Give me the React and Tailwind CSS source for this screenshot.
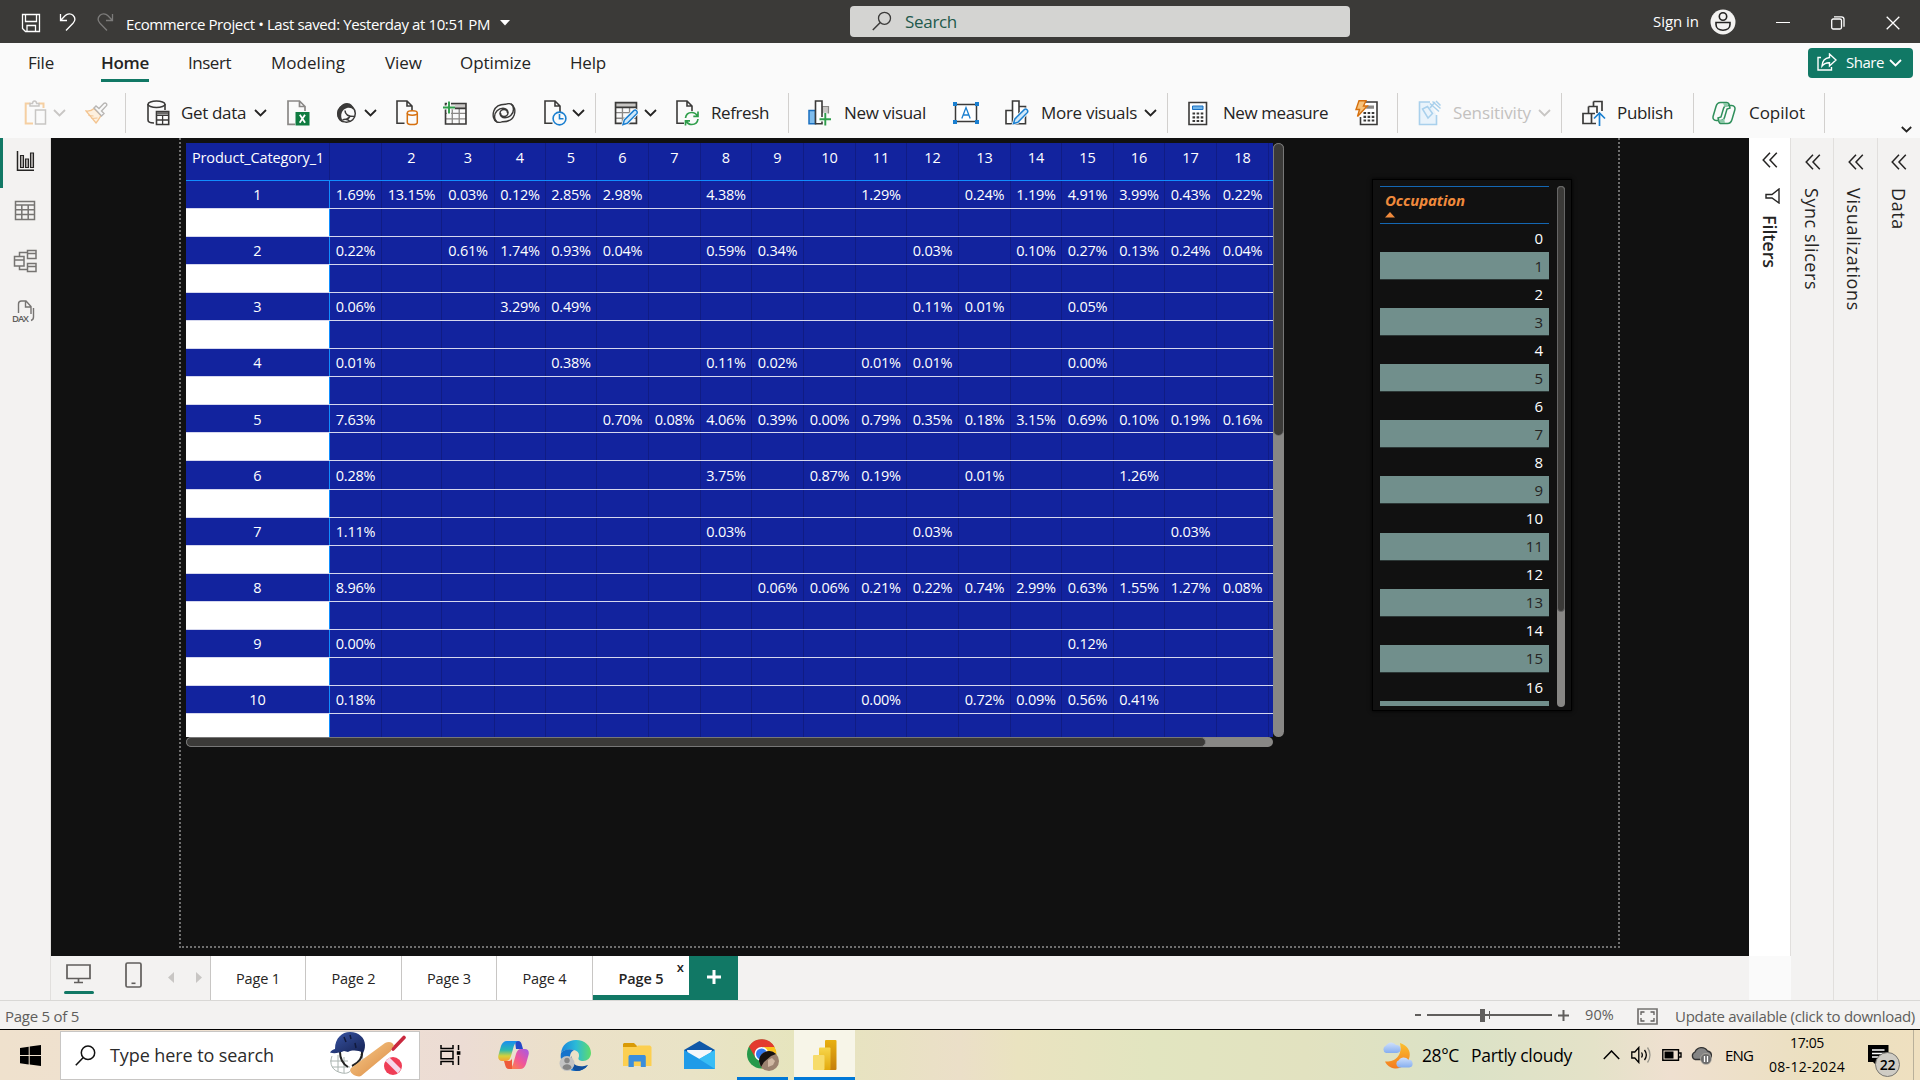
import { useLayoutEffect, useRef } from "react";

/* Single line of text whose tracking is adjusted so that it fills its box. */
function T({ className = "", vertical = false, children }) {
  const box = useRef(null);
  const inner = useRef(null);
  useLayoutEffect(() => {
    const el = inner.current;
    el.style.letterSpacing = "0px";
    const b = box.current.getBoundingClientRect();
    const r = el.getBoundingClientRect();
    const diff = vertical ? b.height - r.height : b.width - r.width;
    el.style.letterSpacing = diff / String(children).length + "px";
  });
  return (
    <span ref={box} className={"block shrink-0 whitespace-pre " + className}>
      <span ref={inner} className="inline-block">{children}</span>
    </span>
  );
}

function Svg({ w, h, className = "", children, ...rest }) {
  return (
    <svg width={w} height={h} viewBox={`0 0 ${w} ${h}`} fill="none" className={"block shrink-0 " + className} {...rest}>
      {children}
    </svg>
  );
}

const Chevron = ({ className = "", color = "#252423" }) => (
  <Svg w={13} h={8} className={className}>
    <path d="M1 1l5.5 5.5L12 1" stroke={color} strokeWidth="1.8" />
  </Svg>
);

const Sep = ({ className = "" }) => <div className={"h-10 w-px shrink-0 bg-[#d2d0ce] " + className} />;

const DocShape = ({ stroke = "#3b3a39" }) => (
  <path d="M8.5 23.3H1V1h10l5 5v6M11 1v5h5" stroke={stroke} strokeWidth="1.6" fill="none" />
);

const Grid3 = ({ x = 0, y = 0, s = 22, stroke = "#3b3a39", head = "#c8c6c4" }) => (
  <g transform={`translate(${x} ${y}) scale(${s / 22})`}>
    <path d="M1 1h20v4.5H1z" fill={head} />
    <path d="M1 10.7h20M1 16h20M7.6 5.5V21M14.4 5.5V21" stroke="#8a8886" strokeWidth="1.3" />
    <path d="M1 1h20v20H1zM1 5.7h20" stroke={stroke} strokeWidth="1.6" />
  </g>
);

const Pencil = ({ x, y }) => (
  <g transform={`translate(${x} ${y})`}>
    <path d="M1 15l1.400-4.600L12 .900c1.800-1 4 1 3 3L5.600 13.600z" fill="#fafafa" stroke="#fafafa" strokeWidth="3" />
    <path d="M1 15l1.400-4.600L12 .900c1.800-1 4 1 3 3L5.600 13.600z" fill="#cfe8fa" stroke="#1a7fd0" strokeWidth="1.500" />
  </g>
);

function TitleBar() {
  return (
    <header className="flex h-[43px] shrink-0 items-center bg-[#3b3a38] text-white">
      <Svg w={20} h={20} className="ml-[21px] mt-0.5">
        <path d="M1.500 1.500h17v17h-14l-3-3zM4.500 1.500v7h11v-7M6 18.500v-6h8.500v6" stroke="#fff" strokeWidth="1.300" />
      </Svg>
      <Svg w={18} h={20} className="ml-[18px]">
        <path d="M1.500 2v6.500H8M1.500 8.500l4.800-5c2.200-2.200 5.600-2.300 7.700-.2 2.300 2.300 2.200 5.500 0 7.900L7 18.500" stroke="#fff" strokeWidth="1.300" />
      </Svg>
      <Svg w={18} h={20} className="ml-[19px]">
        <path d="M16.500 2v6.500H10M16.500 8.500l-4.800-5C9.500 1.300 6.100 1.200 4 3.300 1.700 5.600 1.800 8.800 4 11.200l7 7.300" stroke="#7c7b7a" strokeWidth="1.300" />
      </Svg>
      <T className="ml-[12px] mt-1.5 w-[364px] text-[15px]">Ecommerce Project • Last saved: Yesterday at 10:51 PM</T>
      <Svg w={10} h={6} className="ml-[10px] mt-0.5"><path d="M0 0h10L5 5.500z" fill="#fff" /></Svg>
      <div className="-mt-px ml-[340px] flex h-[31px] w-[500px] items-center rounded-sm bg-[#d4d4d2]">
        <Svg w={20} h={20} className="ml-[22px]">
          <circle cx="12.500" cy="7.300" r="6" stroke="#3b3a39" strokeWidth="1.300" />
          <path d="M8.300 11.500L.8 19" stroke="#3b3a39" strokeWidth="1.500" />
        </Svg>
        <T className="ml-[13px] mt-0.5 w-[52px] text-[17px] text-[#22594b]">Search</T>
      </div>
      <T className="ml-[303px] w-[46px] text-[15px]">Sign in</T>
      <Svg w={26} h={26} className="ml-[11px]">
        <circle cx="13" cy="13" r="12.500" fill="#f3f2f1" />
        <circle cx="13" cy="7.500" r="3.700" stroke="#252423" strokeWidth="1.600" />
        <path d="M6 13.500h14v2c0 3.500-3 5.700-7 5.700s-7-2.200-7-5.700z" stroke="#252423" strokeWidth="1.600" />
      </Svg>
      <div className="ml-[40px] mt-0.5 h-[1.500px] w-[14px] bg-white" />
      <Svg w={14} h={14} className="ml-[41px] mt-0.5">
        <rect x=".7" y="3" width="9.800" height="10" rx="1.500" stroke="#fff" strokeWidth="1.300" />
        <path d="M3 .8h7.500c1.500 0 2.500 1 2.500 2.500v7.500" stroke="#fff" strokeWidth="1.300" />
      </Svg>
      <Svg w={14} h={14} className="ml-[41px] mt-0.5"><path d="M.7.7l12.600 12.600M13.300.7L.7 13.300" stroke="#fff" strokeWidth="1.300" /></Svg>
    </header>
  );
}

function MenuBar() {
  return (
    <nav className="flex h-[40px] shrink-0 items-center text-[17px] text-[#252423]">
      <T className="-mt-px ml-[28px] w-[26px]">File</T>
      <div className="ml-[47px] flex h-full w-[48px] flex-col justify-between">
        <T className="mt-[7px] w-[48px] font-semibold">Home</T>
        <div className="mb-[1px] h-[3px] bg-[#117865]" />
      </div>
      <T className="-mt-px ml-[39px] w-[43px]">Insert</T>
      <T className="-mt-px ml-[40px] w-[74px]">Modeling</T>
      <T className="-mt-px ml-[40px] w-[37px]">View</T>
      <T className="-mt-px ml-[38px] w-[71px]">Optimize</T>
      <T className="-mt-px ml-[39px] w-[36px]">Help</T>
      <button className="ml-[1202px] flex h-[30px] w-[105px] items-center rounded bg-[#117865] text-white">
        <Svg w={20} h={18} className="-mt-0.5 ml-[9px]">
          <path d="M4 4.500H1V17h13.500v-3" stroke="#fff" strokeWidth="1.400" />
          <path d="M12.500 1l6.500 6-6.500 6V9.700C9 9.500 7 10.500 5 13c.3-5 3-8 7.500-8.500z" stroke="#fff" strokeWidth="1.400" />
        </Svg>
        <T className="-mt-0.5 ml-[9px] w-[38px] text-[15px]">Share</T>
        <Chevron className="ml-[5px]" color="#fff" />
      </button>
    </nav>
  );
}

function Ribbon() {
  return (
    <div className="flex h-[55px] shrink-0 items-center pt-[5px] text-[17px] text-[#252423]">
      <Svg w={23} h={26} className="ml-[24px]">
        <path d="M6.500 3.500H1.700v20H9M14.500 3.500h5V8" stroke="#f5cfa2" strokeWidth="2" />
        <path d="M6 6V3.500h2.500C8.700 1.800 9.500 1 10.500 1s1.900.8 2.200 2.500H15V6zM11.500 10h10v14h-10z" stroke="#c8c6c4" strokeWidth="1.500" fill="#fafafa" />
      </Svg>
      <Chevron className="ml-[6px]" color="#c8c6c4" />
      <Svg w={24} h={22} className="ml-[19px]">
        <path d="M1 9c4 .5 6-.5 8-2.500l7 7c-1.500 2.500-2.500 4.500-5 7.500z" fill="#fdf0df" stroke="#f3c490" strokeWidth="1.300" />
        <path d="M3.500 13.500l5 .5M6.500 16.500l6-.5" stroke="#f3c490" />
        <path d="M9 6l2-2 3 2.500 5-5.200c1.500-1 3.500.6 2.500 2.400L16.500 9l2.500 2.500-2.500 2.500z" fill="#fafafa" stroke="#b8b6b4" strokeWidth="1.400" />
      </Svg>
      <Sep className="ml-[16px]" />
      <Svg w={23} h={26} className="ml-[21px]">
        <path d="M1 4v16c0 1.800 2.500 3 6 3M18 4v6" stroke="#3b3a39" strokeWidth="1.600" />
        <ellipse cx="9.500" cy="4.200" rx="8.500" ry="3.200" stroke="#3b3a39" strokeWidth="1.500" />
        <path d="M9.500 11.500h12.200v13H9.500z" fill="#fff" stroke="#3b3a39" strokeWidth="1.600" />
        <path d="M9.500 15.300h12.200M9.500 20h12.200M15.600 15v9" stroke="#3b3a39" strokeWidth="1.300" />
        <path d="M10 12h11v2.500H10z" fill="#6b6a69" />
      </Svg>
      <T className="ml-[11px] w-[65px]">Get data</T>
      <Chevron className="ml-[8px]" />
      <Svg w={23} h={26} className="ml-[20px]">
        <path d="M8 24.300H1V1h11.500l5.500 5.500V11M12.500 1v5.500H18" stroke="#8a8886" strokeWidth="1.700" />
        <path d="M8.500 12h14v13.500h-14z" fill="#107c41" />
        <path d="M12.800 14.800l5.300 8M18 14.800l-5.300 8" stroke="#fff" strokeWidth="1.800" />
      </Svg>
      <Svg w={21} h={22} className="ml-[26px]">
        <circle cx="10.500" cy="11.500" r="8.800" stroke="#3b3a39" strokeWidth="1.500" />
        <path d="M11 1c-3 0-5 1.500-7 4C1.500 8 .3 12 2 16c1 2.500 3 4 5.500 4.500C5 17 4.500 13 6 10c1-2 2.500-3.300 5-4 3-.6 5 .2 6.500 2C17.500 4 15 1 11 1z" fill="#3b3a39" />
        <path d="M9 8.500c0 3 2.500 6 9.500 6M6.500 18c2-1 5-1 7.500 1.500M14 13.500c-.5 2-2 3.500-4 4" stroke="#3b3a39" strokeWidth="1.500" />
      </Svg>
      <Chevron className="ml-[7px]" />
      <Svg w={23} h={26} className="ml-[19px]">
        <DocShape />
        <path d="M11.300 13v9.500c0 2.800 10 2.800 10 0V13" fill="#fafafa" stroke="#d6700f" strokeWidth="1.500" />
        <ellipse cx="16.300" cy="13" rx="5" ry="2.200" fill="#fafafa" stroke="#d6700f" strokeWidth="1.500" />
      </Svg>
      <Svg w={25} h={25} className="ml-[24px]">
        <Grid3 x={1.500} y={1.500} s={22.500} />
        <path d="M0 6.500h12M6 0v13" stroke="#fafafa" strokeWidth="4" />
        <path d="M0 6.500h12M6 .5v12" stroke="#2f9e4b" strokeWidth="1.900" />
      </Svg>
      <Svg w={24} h={20} className="ml-[24px]">
        <path d="M15.500 10c0-2-1.500-3.500-3.500-3.500S8 8 8 10.200c0 2.500 2 4.500 5 4.500 4.500 0 8.500-3.500 8.500-8.500 0-2.500-1-4.200-2.500-5.200" stroke="#3b3a39" strokeWidth="1.500" />
        <path d="M8.500 10c0 2 1.500 3.500 3.500 3.500S16 12 16 9.800c0-2.500-2-4.500-5-4.500C6.500 5.300 2.500 8.800 2.500 13.800c0 2.500 1 4.200 2.500 5.200" stroke="#3b3a39" strokeWidth="1.500" />
        <path d="M19 1c-1.500-.6-3-.5-5 .2C8 1 3.500 3.500 1.800 8 .5 12 1 17 5 19c1.500.6 3 .5 5-.2 6 .2 10.500-2.300 12.200-6.800C23.500 8 23 3 19 1z" stroke="#3b3a39" strokeWidth="1.400" />
      </Svg>
      <Svg w={23} h={26} className="ml-[28px]">
        <DocShape />
        <circle cx="15.500" cy="18.500" r="6.400" fill="#fafafa" stroke="#1a7fd0" strokeWidth="1.600" />
        <path d="M15.500 14v4.800h4" stroke="#1a7fd0" strokeWidth="1.600" />
      </Svg>
      <Chevron className="ml-[5px]" />
      <Sep className="ml-[10px]" />
      <Svg w={25} h={25} className="ml-[18px]"><Grid3 x={0.500} y={0.500} s={23} /><Pencil x={8} y={8.500} /></Svg>
      <Chevron className="ml-[5px]" />
      <Svg w={24} h={26} className="ml-[19px]">
        <DocShape />
        <path d="M9.500 18c.5-3.500 3-5.500 6.200-5.500 2.500 0 4.500 1.300 5.800 3.500M22 12v4.500h-4.500M22 19c-.5 3.500-3 5.500-6.200 5.500-2.500 0-4.500-1.300-5.800-3.500M9.500 25v-4.500H14" stroke="#fafafa" strokeWidth="3" />
        <path d="M9.500 18c.5-3.500 3-5.500 6.200-5.500 2.500 0 4.500 1.300 5.800 3.500M22 11.500v4.800h-4.700M22 19c-.5 3.500-3 5.500-6.200 5.500-2.500 0-4.500-1.300-5.800-3.500M9.500 25.500v-4.700H14" stroke="#2f9e4b" strokeWidth="1.700" />
      </Svg>
      <T className="ml-[11px] w-[58px]">Refresh</T>
      <Sep className="ml-[19px]" />
      <Svg w={24} h={26} className="ml-[19px]">
        <path d="M1 10.500h6.500v13.300H1z" fill="#7fbdee" stroke="#1a6fc0" strokeWidth="1.500" />
        <path d="M14 6.500h6.500V13H14z" fill="#c8c6c4" stroke="#8a8886" strokeWidth="1.200" />
        <path d="M7.500 1H14v22.800H7.500z" fill="#fff" stroke="#3b3a39" strokeWidth="1.600" />
        <path d="M11 19.300h13M17.300 12.500V26" stroke="#fafafa" strokeWidth="4.500" />
        <path d="M11.500 19.300H23M17.300 13v12.500" stroke="#2f9e4b" strokeWidth="1.900" />
      </Svg>
      <T className="ml-[12px] w-[82px]">New visual</T>
      <Svg w={26} h={22} className="ml-[27px]">
        <path d="M2.500 2.500h21v17h-21z" stroke="#3b3a39" strokeWidth="1.500" fill="#fff" />
        <path d="M0 0h4v4H0zM22 0h4v4h-4zM0 18h4v4H0zM22 18h4v4h-4z" fill="#1a7fd0" />
        <path d="M8.800 16.500L13 5.500l4.200 11M10.300 13h5.400" stroke="#1a7fd0" strokeWidth="1.300" />
      </Svg>
      <Svg w={25} h={26} className="ml-[26px]">
        <path d="M1 10.500h6.500v13.300H1zM14 6.500h6.500v17.300H14zM7.500 1H14v22.800H7.500z" fill="#fff" stroke="#3b3a39" strokeWidth="1.600" />
        <Pencil x={7.500} y={8.500} />
      </Svg>
      <T className="ml-[11px] w-[96px]">More visuals</T>
      <Chevron className="ml-[7px]" />
      <Sep className="ml-[10px]" />
      <Svg w={20} h={25} className="ml-[20px]">
        <path d="M1 1.500h17.500v22H1z" fill="#fff" stroke="#3b3a39" strokeWidth="1.600" />
        <path d="M4.500 5h10.500v3.500H4.500z" fill="#6fb4ea" stroke="#1a6fc0" />
        <path d="M4.500 12.500h11M4.500 16.300h11M4.500 20h11" stroke="#3b3a39" strokeWidth="2.200" strokeDasharray="2.600 1.500" />
      </Svg>
      <T className="ml-[15px] w-[105px]">New measure</T>
      <Svg w={23} h={26} className="ml-[27px]">
        <path d="M8 2h14v22.500H5.500V17" fill="#fff" stroke="#3b3a39" strokeWidth="1.600" />
        <path d="M12 5.500h7v3.300h-8z" fill="#8a8886" />
        <path d="M8.500 13h11M8.500 16.800h11M8.500 20.500h11" stroke="#3b3a39" strokeWidth="2.200" strokeDasharray="2.600 1.500" />
        <path d="M4 .7h7L8.500 6h3.800L2.500 16.500l2-7H1z" fill="#f7c27a" stroke="#d6700f" strokeWidth="1.400" />
      </Svg>
      <Sep className="ml-[19px]" />
      <Svg w={24} h={26} className="ml-[20px]">
        <path d="M12 2H1.500v22.500h17V15" fill="#e9f3fb" stroke="#a9d0ec" strokeWidth="1.600" />
        <path d="M4.500 9l5-2.500 5 7L10 18z M12 3.500l9 8M14.500 1.500l8 7M18 1l4.500 4.500M12 8l5-6" stroke="#a9d0ec" strokeWidth="1.500" />
      </Svg>
      <T className="ml-[11px] w-[78px] text-[#c3c1bf]">Sensitivity</T>
      <Chevron className="ml-[7px]" color="#c8c6c4" />
      <Sep className="ml-[10px]" />
      <Svg w={24} h={26} className="ml-[20px]">
        <path d="M11.500 1.500h8.500V11M6.500 6.500H15V13M1 13.500h8.500v10H1zM6.500 13V6.500M11.500 6.500v-5M9.500 13.500H13M9.500 23.500H14" stroke="#3b3a39" strokeWidth="1.700" />
        <path d="M17.500 26V13.500M12 18.500l5.500-5.500 5.500 5.500" stroke="#1a7fd0" strokeWidth="1.700" />
      </Svg>
      <T className="ml-[11px] w-[56px]">Publish</T>
      <Sep className="ml-[20px]" />
      <Svg w={24} h={24} className="ml-[18px]">
        <path d="M8.500 1.500h6c1.500 0 2.300.8 2.700 2.300L18 7l-3 1-2.500 8.500c-.6 2-1.600 3-3.500 3H4.200c-2.500 0-3.700-2-3-4.500L4 5.500c.7-2.500 2-4 4.500-4z" stroke="#2f8f5b" strokeWidth="1.500" />
        <path d="M15.500 22.500h-6c-1.500 0-2.300-.8-2.700-2.300L6 17l3-1 2.500-8.500c.6-2 1.600-3 3.500-3h4.800c2.500 0 3.700 2 3 4.500L20 18.500c-.7 2.500-2 4-4.500 4z" stroke="#2f8f5b" strokeWidth="1.500" />
        <path d="M11 2h4l1.500 3.500-4 .5zM6.500 19H10l2-2 1 5H9z" fill="#8cc9a8" />
      </Svg>
      <T className="ml-[13px] w-[56px]">Copilot</T>
      <Sep className="ml-[19px]" />
      <Svg w={11} h={7} className="ml-[76px] mt-[33px]"><path d="M.8 1l4.700 4.500L10.200 1" stroke="#252423" strokeWidth="1.800" /></Svg>
    </div>
  );
}

function LeftNav() {
  return (
    <aside className="flex w-[51px] shrink-0 flex-col border-r border-[#e1dfdd] bg-[#f3f2f1]">
      <div className="flex h-[50px] items-center border-l-[3px] border-[#117865]">
        <Svg w={19} h={21} className="ml-[13px] mt-[-3px]">
          <path d="M1.500 0v19.300H18" stroke="#252423" strokeWidth="1.500" />
          <path d="M4.500 4.500h3v12h-3zM9.500 8h3v8.500h-3zM14.500 2h3v14.500h-3z" fill="#a8a6a4" stroke="#252423" strokeWidth="1.100" />
        </Svg>
      </div>
      <Svg w={22} h={21} className="ml-[14px] mt-[12px]">
        <path d="M1.500 1.500h19v18h-19zM1.500 5h19M1.500 9.800h19M1.500 14.600h19M7.800 5v14.500M14.200 5v14.500" stroke="#767472" strokeWidth="1.500" />
      </Svg>
      <Svg w={24} h={24} className="ml-[13px] mt-[28px]">
        <path d="M1.500 7.500h9.500v9.500H1.500zM14.500 1.500H23v8h-8.500zM14.500 14.500H23v8h-8.500zM1.500 11h9.500M14.500 4.500H23M14.500 17.500H23M6.500 7.500v-4h8M6.500 17v3.500h8" stroke="#767472" strokeWidth="1.500" />
      </Svg>
      <Svg w={24} h={23} className="ml-[12px] mt-[27px]">
        <path d="M6.500 13V4c0-2 1-3 3-3H14l5 5.500V14M13.500 1v6H19M21.500 8v9c0 2-1 3-2.500 3.500" stroke="#767472" strokeWidth="1.400" />
        <text x="0" y="21.500" fontFamily="Open Sans" fontSize="9.500" fill="#605e5c" fontWeight="600" textLength="17">DAX</text>
      </Svg>
    </aside>
  );
}

const MATRIX = [
  ["1", "1.69%|13.15%|0.03%|0.12%|2.85%|2.98%||4.38%|||1.29%||0.24%|1.19%|4.91%|3.99%|0.43%|0.22%"],
  ["2", "0.22%||0.61%|1.74%|0.93%|0.04%||0.59%|0.34%|||0.03%||0.10%|0.27%|0.13%|0.24%|0.04%"],
  ["3", "0.06%|||3.29%|0.49%|||||||0.11%|0.01%||0.05%|||"],
  ["4", "0.01%||||0.38%|||0.11%|0.02%||0.01%|0.01%|||0.00%|||"],
  ["5", "7.63%|||||0.70%|0.08%|4.06%|0.39%|0.00%|0.79%|0.35%|0.18%|3.15%|0.69%|0.10%|0.19%|0.16%"],
  ["6", "0.28%|||||||3.75%||0.87%|0.19%||0.01%|||1.26%||"],
  ["7", "1.11%|||||||0.03%||||0.03%|||||0.03%|"],
  ["8", "8.96%||||||||0.06%|0.06%|0.21%|0.22%|0.74%|2.99%|0.63%|1.55%|1.27%|0.08%"],
  ["9", "0.00%||||||||||||||0.12%|||"],
  ["10", "0.18%||||||||||0.00%||0.72%|0.09%|0.56%|0.41%||"],
];
const HEADS = ["", "2", "3", "4", "5", "6", "7", "8", "9", "10", "11", "12", "13", "14", "15", "16", "17", "18"];
const COLS =
  "grid grid-cols-[144px_52px_60px_53px_51px_51px_52px_52px_51px_52px_52px_51px_52px_52px_51px_52px_51px_52px_52px_1fr]";

function MatrixRow({ label, cells }) {
  return (
    <>
      <div className={COLS + " h-[28.050px] shrink-0 border-b border-[#d5d7ee]"}>
        <div className="flex items-center justify-center border-r border-[#118dff] pt-px">{label}</div>
        {cells.map((c, i) => (
          <div key={i} className="flex items-center justify-center border-r border-[#101c84] pt-px tracking-[-0.250px]">{c}</div>
        ))}
      </div>
      <div className={COLS + " h-[28.050px] shrink-0 border-b border-[#d5d7ee]"}>
        <div className="border-r border-[#118dff] bg-white" />
        {cells.map((c, i) => (
          <div key={i} className="border-r border-[#101c84]" />
        ))}
      </div>
    </>
  );
}

function Matrix() {
  return (
    <section className="ml-[5px] mt-[5px] flex h-[604px] w-[1098px] flex-col">
      <div className="flex h-[594px]">
        <div className="flex h-full w-[1087px] flex-col overflow-hidden bg-[#12239e] text-[14.500px] text-white">
          <div className={COLS + " h-[38px] shrink-0 border-b border-[#118dff]"}>
            <div className="flex border-r border-[#101c84] pl-[6px] pt-[4px]"><T className="w-[132px]">Product_Category_1</T></div>
            {HEADS.map((h, i) => (
              <div key={i} className="flex justify-center border-r border-[#101c84] pt-[4px]">{h}</div>
            ))}
          </div>
          {MATRIX.map(([label, row]) => (
            <MatrixRow key={label} label={label} cells={row.split("|")} />
          ))}
        </div>
        <div className="h-full w-[11px] overflow-hidden rounded-full bg-[#888785]">
          <div className="h-[293px] w-full rounded-full border border-[#777] bg-[#3b3a38]" />
        </div>
      </div>
      <div className="h-[10px] w-[1087px] overflow-hidden rounded-full bg-[#888785]">
        <div className="h-full w-[1020px] rounded-full border border-[#777] bg-[#3b3a38]" />
      </div>
    </section>
  );
}

function Occupation() {
  return (
    <section className="ml-[88px] mt-[41px] flex h-[532px] w-[200px] border border-black pl-[7px] pt-[6px] shadow-[0_0_4px_#000]">
      <div className="flex h-[520px] w-[169px] flex-col overflow-hidden text-[15px] text-white">
        <div className="flex h-[38px] shrink-0 flex-col border-y border-[#1467b3] pl-[5px] pt-[2px]">
          <T className="w-[80px] text-[15px] font-bold italic leading-[22px] text-[#f08a3c]">Occupation</T>
          <Svg w={10} h={6} className="mt-[1px]"><path d="M5 0l5 5.500H0z" fill="#f08a3c" /></Svg>
        </div>
        {Array.from({ length: 18 }, (_, i) => (
          <div
            key={i}
            className={
              "flex h-[28.050px] shrink-0 items-center justify-end border-b pr-[6px] pt-px " +
              (i % 2 ? "border-[#2c3736] bg-[#718f8c] text-[#252423]" : "border-[#111]")
            }
          >
            {i < 17 ? i : ""}
          </div>
        ))}
      </div>
      <div className="ml-[8px] h-[521px] w-[8px] overflow-hidden rounded-full bg-[#888785]">
        <div className="h-[426px] w-full rounded-full border border-[#666] bg-[#3b3a38]" />
      </div>
    </section>
  );
}

const DoubleChevron = ({ className = "" }) => (
  <Svg w={16} h={16} className={className}><path d="M8 .8L1.200 8 8 15.200M14.800.8L8 8l6.800 7.200" stroke="#252423" strokeWidth="1.500" /></Svg>
);

function Panes() {
  return (
    <aside className="flex shrink-0 text-[18px] font-medium text-[#252423]">
      <div className="flex h-[818px] w-[42px] flex-col items-center border-r border-[#e1dfdd] bg-white">
        <DoubleChevron className="mt-[14px]" />
        <Svg w={15} h={16} className="ml-[6px] mt-[20px]"><path d="M14 1v14l-7-5H1V6.500h6z" stroke="#252423" strokeWidth="1.400" /></Svg>
        <T vertical className="mt-[11px] h-[53px] font-semibold [writing-mode:vertical-rl]">Filters</T>
      </div>
      <div className="flex w-[43px] flex-col items-center border-r border-[#e1dfdd] bg-[#f3f2f1]">
        <DoubleChevron className="mt-[16px] ml-px" />
        <T vertical className="mt-[18px] mr-0.5 h-[102px] [writing-mode:vertical-rl]">Sync slicers</T>
      </div>
      <div className="flex w-[44px] flex-col items-center border-r border-[#e1dfdd] bg-[#f3f2f1]">
        <DoubleChevron className="mt-[16px]" />
        <T vertical className="mt-[18px] mr-1 h-[123px] [writing-mode:vertical-rl]">Visualizations</T>
      </div>
      <div className="flex w-[42px] flex-col items-center bg-[#f3f2f1]">
        <DoubleChevron className="mt-[16px]" />
        <T vertical className="mt-[18px] mr-0.5 h-[42px] [writing-mode:vertical-rl]">Data</T>
      </div>
    </aside>
  );
}

function PageTabs() {
  return (
    <div className="flex h-[44px] shrink-0 bg-[#f3f2f1] text-[14.500px] text-[#252423]">
      <div className="ml-[13px] flex w-[30px] flex-col items-center justify-between pb-[6px] pt-[8px]">
        <Svg w={25} h={20} className="-ml-0.5">
          <path d="M1 1h23v13.500H1zM12.500 14.500V18M8 18.500h9" stroke="#605e5c" strokeWidth="1.700" />
        </Svg>
        <div className="h-[3px] w-full rounded-sm bg-[#117865]" />
      </div>
      <Svg w={17} h={26} className="ml-[31px] mt-[6px]">
        <rect x="1" y="1" width="15" height="24" rx="1.500" stroke="#605e5c" strokeWidth="1.700" />
        <path d="M6.500 21.300h4" stroke="#605e5c" strokeWidth="1.600" />
      </Svg>
      <Svg w={6} h={11} className="ml-[26px] mt-[16px]"><path d="M6 0v11L0 5.500z" fill="#c8c6c4" /></Svg>
      <Svg w={6} h={11} className="ml-[22px] mt-[16px]"><path d="M0 0v11l6-5.500z" fill="#c8c6c4" /></Svg>
      <div className="ml-[8px] flex h-full w-[96px] items-center justify-center border-x border-[#c8c6c4] bg-white pt-[2px]"><T className="w-[44px]">Page 1</T></div>
      <div className="flex h-full w-[96px] items-center justify-center border-r border-[#c8c6c4] bg-white pt-[2px]"><T className="w-[44px]">Page 2</T></div>
      <div className="flex h-full w-[95px] items-center justify-center border-r border-[#c8c6c4] bg-white pt-[2px]"><T className="w-[44px]">Page 3</T></div>
      <div className="flex h-full w-[96px] items-center justify-center border-r border-[#c8c6c4] bg-white pt-[2px]"><T className="w-[44px]">Page 4</T></div>
      <div className="relative flex h-full w-[96px] items-center justify-center border-b-[5px] border-[#117865] bg-white pt-[7px]">
        <T className="w-[45px] font-semibold">Page 5</T>
        <span className="absolute right-[5px] top-[2px] text-[13px] font-semibold leading-[18px]">x</span>
      </div>
      <div className="flex h-full w-[49px] items-center justify-center bg-[#117865]">
        <Svg w={14} h={14} className="mb-0.5"><path d="M0 7h14M7 0v14" stroke="#fff" strokeWidth="3" /></Svg>
      </div>
    </div>
  );
}

function StatusBar() {
  return (
    <footer className="flex h-[30px] shrink-0 items-center border-b border-t border-b-black border-t-[#d9d8d6] bg-[#f3f2f1] text-[15px] text-[#605e5c]">
      <T className="ml-[5px] mt-0.5 w-[74px]">Page 5 of 5</T>
      <div className="ml-[1336px] h-[2px] w-[6px] bg-[#605e5c]" />
      <div className="ml-[6px] flex w-[125px] items-center">
        <div className="h-[1.500px] w-[53px] bg-[#605e5c]" />
        <div className="h-[13px] w-[5px] bg-[#605e5c]" />
        <div className="h-[1.500px] w-[4px] bg-[#605e5c]" />
        <div className="h-[8px] w-px bg-[#605e5c]" />
        <div className="h-[1.500px] w-[62px] bg-[#605e5c]" />
      </div>
      <Svg w={11} h={11} className="ml-[6px]"><path d="M0 5.500h11M5.500 0v11" stroke="#605e5c" strokeWidth="2" /></Svg>
      <T className="ml-[16px] w-[29px] text-[14.500px]">90%</T>
      <Svg w={21} h={17} className="ml-[23px] mt-0.5">
        <path d="M1 1h19v15H1z" stroke="#767472" strokeWidth="1.700" />
        <path d="M4 7V4h3.500M13.500 4H17v3M17 10v3h-3.500M7.500 13H4v-3" stroke="#605e5c" strokeWidth="1.300" />
      </Svg>
      <T className="ml-[17px] mt-0.5 w-[240px]">Update available (click to download)</T>
    </footer>
  );
}

const Cloud = ({ x, y, s = 1, fill }) => (
  <path transform={`translate(${x} ${y}) scale(${s})`} d="M4 12a4 4 0 0 1 0-7.500A6 6 0 0 1 14 4a4 4 0 0 1 1 8z" fill={fill} />
);

function Taskbar() {
  return (
    <div className="flex h-[50px] shrink-0 items-center bg-[linear-gradient(90deg,#efe1cd_0%,#efe0d2_15%,#ecdcd4_24%,#ebe1c8_30%,#e9e3c6_36%,#e6e5bd_42%,#ebdfc8_50%,#eae3c0_53%,#e2e5c0_60%,#e2e2c0_68%,#dbe2c6_76%,#e4e2c8_83%,#efe0d0_87%,#ebe0bf_95%,#efe0c0_100%)] text-black">
      <Svg w={21} h={21} className="ml-[20px]">
        <path d="M0 3l8.700-1.200v8.300H0zM9.700 1.600L21 0v10.100H9.700zM0 11.100h8.700v8.300L0 18.200zM9.700 11.100H21V21L9.700 19.500z" fill="#000" />
      </Svg>
      <div className="ml-[19px] flex h-[49px] w-[360px] items-center border border-[#c8c6c4] bg-white">
        <Svg w={21} h={21} className="ml-[14px]">
          <circle cx="13" cy="7.800" r="6.700" stroke="#111" strokeWidth="1.500" />
          <path d="M8.300 12.500L.8 20.200" stroke="#111" strokeWidth="1.600" />
        </Svg>
        <T className="ml-[14px] w-[164px] text-[18px] text-[#2b2b2b]">Type here to search</T>
        <Svg w={76} h={46} className="ml-[56px]">
          <defs>
            <linearGradient id="helm" x1="0" y1="0" x2="1" y2="1"><stop stopColor="#3a57a8" /><stop offset="1" stopColor="#152253" /></linearGradient>
            <linearGradient id="bat" x1="0" y1="0" x2="1" y2="1"><stop stopColor="#f9cf8f" /><stop offset="1" stopColor="#d9853d" /></linearGradient>
          </defs>
          <path d="M2 24c-3 8 0 15 10 17 5 1 8-1 9-3M0 29h18M2 35h18M8 23v17M14 25v16M30 22c4 4 4 8 1 13" stroke="#aab4b0" strokeWidth="1" />
          <path d="M10 20c0 8 3 12 8 15M32 19c1 6-3 12-10 15" stroke="#222" strokeWidth="2" />
          <path d="M5 17C5 6 12 0 20 0c9 0 15 6 15 13 0 4-1 6-2 8-5-3-11-3-15-1l-4-1C9 21 4 22 0 20.500c1-2 3-3 5-3.500z" fill="url(#helm)" />
          <path d="M14 5l2 5M20 3l1 4M25 11l1 5" stroke="#111a3d" strokeWidth="1.500" />
          <path d="M63 17L74 5.500" stroke="#c9283e" strokeWidth="3.600" strokeLinecap="round" />
          <path d="M21 36L55 11c4-2 8-1 9 3-2 1-3 3-3 5L31 44c-3 2-14-3-10-8z" fill="url(#bat)" />
          <circle cx="63" cy="34" r="9" fill="#ef3d56" />
          <path d="M55.500 29l4-3.500L71 37l-3 4.500z" fill="#f6d7ea" />
        </Svg>
      </div>
      <Svg w={21} h={20} className="ml-[20px]">
        <path d="M1 0v3.500h12V0M1 20v-3.500h12V20M1 6.200h12v7.600H1zM18.500 0v5M18.500 11v9" stroke="#000" strokeWidth="1.500" />
        <path d="M16.800 6.200h3.600v3.600h-3.600z" fill="#000" />
      </Svg>
      <Svg w={31} h={28} className="ml-[37px]">
        <defs>
          <linearGradient id="cpa" x1="0" y1="0" x2="0" y2="1"><stop stopColor="#1a8df0" /><stop offset=".45" stopColor="#2bb8b0" /><stop offset=".75" stopColor="#d6d23a" /><stop offset="1" stopColor="#f6a035" /></linearGradient>
          <linearGradient id="cpb" x1="1" y1="0" x2="0" y2="1"><stop stopColor="#a25be8" /><stop offset=".5" stopColor="#f0549a" /><stop offset="1" stopColor="#ff8a3c" /></linearGradient>
        </defs>
        <path d="M17 0h3c2.500 0 3.500 2 4 4.500l1 3.500h-7z" fill="#2548c8" />
        <path d="M9 0h11c-3 1-4 4-5 8l-2 7c-1 3-2 5-5 5H4c-3 0-4.500-2.500-3.500-6l2.500-9C4 2 6 0 9 0z" fill="url(#cpa)" />
        <path d="M22 28H11c3-1 4-4 5-8l2-7c1-3 2-5 5-5h4c3 0 4.500 2.500 3.500 6L28 23c-1 3-3 5-6 5z" fill="url(#cpb)" />
        <path d="M14 28h-3c-2.500 0-3.500-2-4-4.500L6 20h5c1.500 0 2.500-1 3-2.500z" fill="#ee5a3a" />
      </Svg>
      <Svg w={33} h={31} className="ml-[30px]">
        <defs><linearGradient id="edg" x1="0" y1="0" x2="1" y2="0"><stop stopColor="#1a86dc" /><stop offset=".5" stopColor="#2bbad8" /><stop offset="1" stopColor="#5fdc6a" /></linearGradient></defs>
        <path d="M2 13C3 5 9 0 17 0c9 0 15 6 15 13 0 5-4 8-8 8-3 0-5-1-4.500-3 1-2 1-6-3-7.500C11 8.500 4 10 2 13z" fill="url(#edg)" />
        <path d="M2 13c3-4 9-4.500 13-3-4 2-5 7-3 11 3 6 11 8 17 4-3 4-7 6-12 6C8 31 0 23 2 13z" fill="#1673cc" />
        <path d="M12.500 16c-1 7 5 13 16.500 9-3 4-7 6-12 6-6-3-8-10-4.500-15z" fill="#114f9c" />
        <circle cx="8" cy="23.500" r="7.500" fill="#c3c3c3" />
        <circle cx="8" cy="20.500" r="2.700" fill="#858585" />
        <path d="M3.500 28c0-5 9-5 9 0-2 2.500-7 2.500-9 0z" fill="#858585" />
      </Svg>
      <Svg w={29} h={24} className="ml-[31px]">
        <path d="M1 0h10l3 3v4H0V1z" fill="#d99a06" />
        <path d="M0 4h13l2-1.500h12L28.500 4v19H0z" fill="#fccf50" />
        <path d="M5.500 24V14c0-1.500.8-2 2-2h13.300c1.200 0 2 .5 2 2v10h-5v-5.500h-7V24z" fill="#3b8edb" />
      </Svg>
      <Svg w={31} h={28} className="ml-[32px]">
        <path d="M0 9L15.500 0 31 9v4H0z" fill="#0f58a8" />
        <path d="M3 9h25l-3 8-10 3L4 15z" fill="#f5f7fa" />
        <path d="M0 9l15.500 9L31 9v19H0z" fill="#1f9be8" />
        <path d="M31 9v19L15 18z" fill="#38bdf5" />
      </Svg>
      <div className="ml-[22px] flex h-full w-[51px] flex-col items-center justify-between border-b-[3px] border-[#0078d7] pt-[9px]">
        <Svg w={32} h={33}>
          <circle cx="14.500" cy="15" r="14.500" fill="#26994a" />
          <path d="M2 7.500A14.500 14.500 0 0 1 27.500 8H14.500L8 18z" fill="#e33b2e" />
          <path d="M27.500 8a14.500 14.500 0 0 1-13 21.500L21 18 16 8z" fill="#fcc31e" />
          <circle cx="14.500" cy="15" r="7" fill="#fff" />
          <circle cx="14.500" cy="15" r="5.500" fill="#2f78ee" />
          <circle cx="22" cy="22" r="10" fill="#9c8270" />
          <path d="M12 22a10 10 0 0 1 17-7l-5 2-7 6-3 5z" fill="#171210" />
          <path d="M21 21l4-2 3 3-2 4-5 2z" fill="#d0b8a3" />
        </Svg>
      </div>
      <div className="ml-[6px] flex h-full w-[61px] justify-center border-b-[3px] border-[#0078d7] bg-[#f7f5e8] pt-[10px]">
        <Svg w={24} h={30}>
          <defs>
            <linearGradient id="pba" x1="0" y1="0" x2="0" y2="1"><stop stopColor="#e8b010" /><stop offset="1" stopColor="#c57f0c" /></linearGradient>
            <linearGradient id="pbb" x1="0" y1="0" x2="0" y2="1"><stop stopColor="#f7d64b" /><stop offset="1" stopColor="#e2a90c" /></linearGradient>
          </defs>
          <rect x="12" y="0" width="11.500" height="30" rx="1" fill="url(#pba)" />
          <rect x="6" y="7.500" width="11.500" height="22.500" rx="1" fill="url(#pbb)" />
          <rect x="0" y="15" width="11.500" height="15" rx="1" fill="#f7dc6a" />
        </Svg>
      </div>
      <Svg w={31} h={29} className="ml-[527px]">
        <defs>
          <linearGradient id="moon" x1="0" y1="0" x2="0" y2="1"><stop stopColor="#fbc02d" /><stop offset="1" stopColor="#f47b20" /></linearGradient>
          <linearGradient id="cld" x1="0" y1="0" x2="0" y2="1"><stop stopColor="#cfe0fb" /><stop offset="1" stopColor="#86aef0" /></linearGradient>
        </defs>
        <path d="M18 2c7 2 11 8 9.500 14S20 28 13 27.500c-5-.5-8-3-10-7 8 1 18-4 15-18.500z" fill="url(#moon)" />
        <Cloud x={0} y={0} s={1} fill="url(#cld)" />
        <Cloud x={13} y={15} s={0.950} fill="url(#cld)" />
      </Svg>
      <T className="ml-[9px] w-[37px] text-[17.500px]">28°C</T>
      <T className="ml-[12px] w-[101px] text-[17.500px]">Partly cloudy</T>
      <Svg w={17} h={10} className="ml-[31px]"><path d="M.8 9l7.700-8 7.700 8" stroke="#000" strokeWidth="1.500" /></Svg>
      <Svg w={21} h={18} className="ml-[11px]">
        <path d="M.8 6h3l4-4.500v15L3.800 12h-3zM10.500 6.500c1 1.500 1 3.500 0 5M13.500 4c2.200 3 2.200 7 0 10" stroke="#000" strokeWidth="1.300" />
        <path d="M16.500 1.500c3.300 4.500 3.300 10.500 0 15" stroke="#96948a" strokeWidth="1.300" />
      </Svg>
      <Svg w={20} h={12} className="ml-[10px]">
        <path d="M.8.8h15.700v10.400H.8zM17 4h2v4h-2" stroke="#000" strokeWidth="1.400" />
        <path d="M2.500 2.500h9v7h-9z" fill="#000" />
      </Svg>
      <Svg w={21} h={19} className="ml-[9px]">
        <path d="M4 13.500a4 4 0 0 1 0-7.500A7 7 0 0 1 16.500 5 4.500 4.500 0 0 1 18 13.500z" fill="#858585" stroke="#333" strokeWidth="1.300" />
        <circle cx="15" cy="13" r="5.500" fill="#6b6b6b" stroke="#c9c3b5" strokeWidth=".6" />
        <path d="M13.500 10v6M16.500 10v6" stroke="#fff" strokeWidth="1.300" />
      </Svg>
      <T className="ml-[13px] w-[28px] text-[15px]">ENG</T>
      <div className="ml-[16px] flex w-[76px] flex-col items-center text-[14px] leading-[24px]">
        <T className="w-[34px]">17:05</T>
        <T className="w-[76px]">08-12-2024</T>
      </div>
      <div className="relative ml-[23px] h-[30px] w-[33px]">
        <Svg w={21} h={22} className="mt-[5px]">
          <path d="M0 0h20.500v17H9v4l-4-4H0z" fill="#000" />
          <path d="M4 5h12.500M4 8.500h12.500M4 12h8" stroke="#fff" strokeWidth="1.300" />
        </Svg>
        <div className="absolute left-[7px] top-[12px] flex h-[25px] w-[25px] items-center justify-center rounded-full border border-[#77756f] bg-[#cfccc4] text-[14px] font-semibold tracking-[-0.300px]">22</div>
      </div>
      <div className="ml-[12px] h-full w-px bg-[#b9b09a]" />
    </div>
  );
}

export default function App() {
  return (
    <div className="flex h-[1080px] w-[1920px] flex-col overflow-hidden bg-[#fafafa] font-['Open_Sans','Noto_Sans',sans-serif]">
      <TitleBar />
      <MenuBar />
      <Ribbon />
      <div className="flex h-[862px] shrink-0">
        <LeftNav />
        <div className="flex w-[1698px] shrink-0 flex-col">
          <main className="h-[818px] bg-[#111]">
            <div className="ml-[128px] flex h-[810px] w-[1441px] items-start border-2 border-t-0 border-dotted border-[#6f6f6f]">
              <Matrix />
              <Occupation />
            </div>
          </main>
          <PageTabs />
        </div>
        <Panes />
      </div>
      <StatusBar />
      <Taskbar />
    </div>
  );
}
